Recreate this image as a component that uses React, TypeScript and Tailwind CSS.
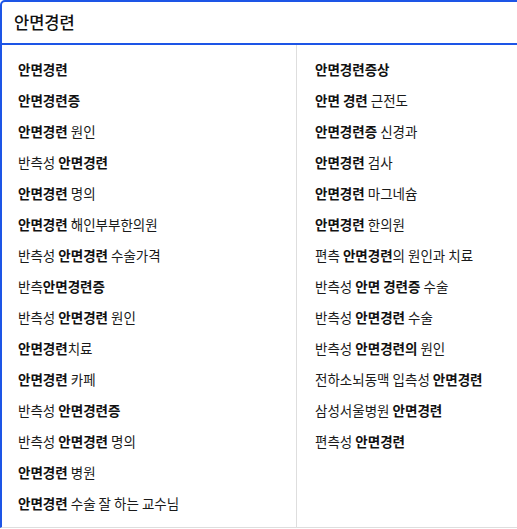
import React from "react";

type Part = { t: string; b?: boolean };

const left: Part[][] = [
  [{ t: "안면경련", b: true }],
  [{ t: "안면경련증", b: true }],
  [{ t: "안면경련", b: true }, { t: " 원인" }],
  [{ t: "반측성 " }, { t: "안면경련", b: true }],
  [{ t: "안면경련", b: true }, { t: " 명의" }],
  [{ t: "안면경련", b: true }, { t: " 해인부부한의원" }],
  [{ t: "반측성 " }, { t: "안면경련", b: true }, { t: " 수술가격" }],
  [{ t: "반측" }, { t: "안면경련증", b: true }],
  [{ t: "반측성 " }, { t: "안면경련", b: true }, { t: " 원인" }],
  [{ t: "안면경련", b: true }, { t: "치료" }],
  [{ t: "안면경련", b: true }, { t: " 카페" }],
  [{ t: "반측성 " }, { t: "안면경련증", b: true }],
  [{ t: "반측성 " }, { t: "안면경련", b: true }, { t: " 명의" }],
  [{ t: "안면경련", b: true }, { t: " 병원" }],
  [{ t: "안면경련", b: true }, { t: " 수술 잘 하는 교수님" }],
];

const right: Part[][] = [
  [{ t: "안면경련증상", b: true }],
  [{ t: "안면 경련", b: true }, { t: " 근전도" }],
  [{ t: "안면경련증", b: true }, { t: " 신경과" }],
  [{ t: "안면경련", b: true }, { t: " 검사" }],
  [{ t: "안면경련", b: true }, { t: " 마그네슘" }],
  [{ t: "안면경련", b: true }, { t: " 한의원" }],
  [{ t: "편측 " }, { t: "안면경련", b: true }, { t: "의 원인과 치료" }],
  [{ t: "반측성 " }, { t: "안면 경련증", b: true }, { t: " 수술" }],
  [{ t: "반측성 " }, { t: "안면경련", b: true }, { t: " 수술" }],
  [{ t: "반측성 " }, { t: "안면경련의", b: true }, { t: " 원인" }],
  [{ t: "전하소뇌동맥 입측성 " }, { t: "안면경련", b: true }],
  [{ t: "삼성서울병원 " }, { t: "안면경련", b: true }],
  [{ t: "편측성 " }, { t: "안면경련", b: true }],
];

const Row = ({ parts }: { parts: Part[] }) => (
  <li className="h-[31px] flex items-center whitespace-pre text-[13.5px] text-[#1a1a1a]">
    {parts.map((p, i) => (
      <span key={i} className={p.b ? "font-bold text-[#111]" : ""}>
        {p.t}
      </span>
    ))}
  </li>
);

export default function App() {
  return (
    <div
      className="w-[517px] h-[529px] overflow-hidden bg-white"
      style={{ fontFamily: '"Noto Sans CJK KR", "Noto Sans", sans-serif' }}
    >
      <div className="w-[560px]">
        {/* search box */}
        <div className="h-[45px] border-2 border-[#1d55e6] rounded-tl-[5px] flex items-center pl-3">
          <span className="text-[16.5px] font-medium text-[#111]">안면경련</span>
        </div>

        {/* suggestions */}
        <div className="h-[483px] border-l-2 border-l-[#1d55e6] border-b border-b-[#dedede] grid grid-cols-[295px_1fr]">
          <ul className="pt-[9px] pl-4 border-r border-r-[#dedede]">
            {left.map((r, i) => (
              <Row key={i} parts={r} />
            ))}
          </ul>
          <ul className="pt-[9px] pl-[18px]">
            {right.map((r, i) => (
              <Row key={i} parts={r} />
            ))}
          </ul>
        </div>
      </div>
    </div>
  );
}
